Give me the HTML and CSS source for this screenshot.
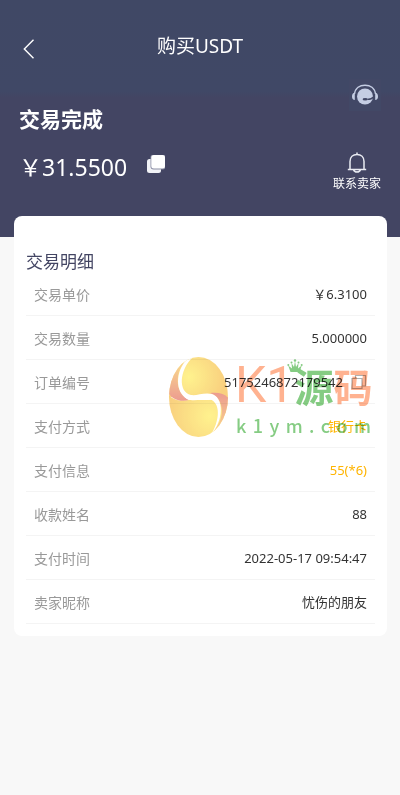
FILE: index.html
```html
<!DOCTYPE html>
<html lang="zh-CN">
<head>
    <meta charset="utf-8">
    <meta name="viewport" content="width=device-width, initial-scale=1">
    <title>购买USDT</title>
    <link rel="stylesheet" href="styles.css">
</head>
<body>
    <header class="hero">
        <div class="nav">
            <button type="button" class="icon-btn back" aria-label="返回">
                <svg width="12" height="20" viewBox="0 0 12 20" fill="none" stroke="#fff" stroke-width="1.4"><path d="M10.5 .8 1.3 10l9.2 9.2"/></svg>
            </button>
            <h1>购买USDT</h1>
        </div>
        <button type="button" class="icon-btn service" aria-label="客服">
            <svg width="32" height="32" viewBox="0 0 32 32">
                <path d="M5.5 15C6.2 9 10.8 6.200 16 6.200S25.800 9 26.500 15" fill="none" stroke="#c5cde3" stroke-width="1.400"/>
                <path d="M5.800 13.800v7.200C4 21 3 19.500 3 17.400s1-3.600 2.800-3.600zM26.200 13.800v7.200c1.800 0 2.800-1.500 2.800-3.600s-1-3.600-2.800-3.600z" fill="#c5cde3"/>
                <circle cx="16" cy="17.500" r="8" fill="#c5cde3"/>
                <path d="M24.500 18c-1.500 2-3.800 2.300-6 2.300" fill="none" stroke="#424765" stroke-width="1.300"/>
                <ellipse cx="16.200" cy="20.300" rx="2.600" ry="1.200" fill="#424765"/>
            </svg>
        </button>
        <h2 class="status">交易完成</h2>
        <div class="summary">
            <div class="amount">
                <span>&#xFFE5;31.5500</span>
                <button type="button" class="icon-btn" aria-label="复制金额">
                    <svg width="18" height="18" viewBox="0 0 18 18"><rect x="0" y="4" width="14" height="14" rx="2.500" fill="#f1f2f6"/><rect x="3.500" y="-.5" width="15" height="15" rx="3" fill="#8b8ea4"/><rect x="4.300" y="0" width="13.700" height="13.500" rx="2.500" fill="#fff"/></svg>
                </button>
            </div>
            <button type="button" class="icon-btn contact">
                <svg width="20" height="21" viewBox="0 0 20 21" fill="none" stroke="#e9ebf2" stroke-width="1.500">
                    <path d="M10 .5v2M3 17.200V9.500C3 5 6 2.500 10 2.500s7 2.500 7 7v7.700M.8 17.500h18.400M6.500 17.800c.5 1.500 1.800 2.300 3.500 2.300s3-.8 3.500-2.300"/>
                </svg>
                <span>联系卖家</span>
            </button>
        </div>
    </header>

    <main class="card">
        <h2>交易明细</h2>
        <dl class="detail">
            <div class="row"><dt>交易单价</dt><dd>&#xFFE5;6.3100</dd></div>
            <div class="row"><dt>交易数量</dt><dd>5.000000</dd></div>
            <div class="row">
                <dt>订单编号</dt>
                <dd>5175246872179542
                    <button type="button" class="icon-btn copy" aria-label="复制订单编号">
                        <svg width="16" height="16" viewBox="0 0 16 16" fill="none" stroke="#b0b0b0" stroke-width="1.200"><path d="M1 4.500h10v10H1zM4.500 4.500V1.500h10V12H11"/></svg>
                    </button>
                </dd>
            </div>
            <div class="row"><dt>支付方式</dt><dd class="pay">银行卡</dd></div>
            <div class="row"><dt>支付信息</dt><dd class="pay">55(*6)</dd></div>
            <div class="row"><dt>收款姓名</dt><dd>88</dd></div>
            <div class="row"><dt>支付时间</dt><dd>2022-05-17 09:54:47</dd></div>
            <div class="row"><dt>卖家昵称</dt><dd>忧伤的朋友</dd></div>
        </dl>

        <div class="watermark">
            <svg class="ball" width="60" height="80" viewBox="0 0 60 80">
                <defs>
                    <radialGradient id="gold-top" gradientUnits="userSpaceOnUse" cx="20" cy="20" r="36"><stop offset="0" stop-color="#fff07a"/><stop offset="1" stop-color="#f8c868"/></radialGradient>
                    <radialGradient id="gold-bottom" gradientUnits="userSpaceOnUse" cx="41" cy="59" r="42"><stop offset="0" stop-color="#fff07a"/><stop offset="1" stop-color="#f8c868"/></radialGradient>
                    <linearGradient id="rim-left" x1="0" y1="0" x2="0" y2="1"><stop offset="0" stop-color="#fbdc78"/><stop offset="1" stop-color="#e98a7c"/></linearGradient>
                    <linearGradient id="rim-right" x1="0" y1="0" x2="0" y2="1"><stop offset="0" stop-color="#e98a7c"/><stop offset="1" stop-color="#fbd778"/></linearGradient>
                    <clipPath id="egg"><ellipse cx="29.500" cy="40" rx="29.500" ry="40"/></clipPath>
                </defs>
                <g clip-path="url(#egg)">
                    <path d="M0 0h60v40H0z" fill="url(#gold-top)"/>
                    <path d="M0 38c5 6 12 6 20 5h20c8 0 10-4 20-4v41H0z" fill="url(#gold-bottom)"/>
                    <path d="M20 0H0v37c4 6 12 8 20 6C8 37 6 22 12 10z" fill="url(#rim-left)"/>
                    <path d="M40 80h20V42c-3-5-10-7-19-6 14 5 14 22 8 32z" fill="url(#rim-right)"/>
                    <path d="M18 2C6 15 6 35 18 42c7 3 14 0 21 0 11 1 14 17 3 36 13-15 13-37 1-41-8-2-15 2-21 1C9 35 10 13 24 0z" fill="#fff"/>
                </g>
            </svg>
            <div class="brand">
                <div class="brand-name">
                    <span class="latin">K1</span>
                    <span class="leaf">源</span>
                    <span>码</span>
                    <svg class="crown" width="16" height="14" viewBox="0 0 16 14" fill="#70c36d"><path d="M3.500 13 1.200 6.500 5 9.500 4.500 4 7 8l1-6 1 6 2.500-4-.5 5.500 3.800-3-2.300 6.500z"/><circle cx="1.300" cy="6" r="1"/><circle cx="4.500" cy="3.500" r="1"/><circle cx="8" cy="1.500" r="1.200"/><circle cx="11.500" cy="3.500" r="1"/><circle cx="14.700" cy="6" r="1"/></svg>
                </div>
                <div class="brand-site"><span>k</span><span>1</span><span>y</span><span>m</span><span>.</span><span>c</span><span>o</span><span>m</span></div>
            </div>
        </div>
    </main>
</body>
</html>
```
FILE: styles.css
```css
* {
    box-sizing: border-box;
}

body {
    margin: 0;
    background: #f8f8f8;
    color: #333;
    font-family: "Noto Sans", "Noto Sans CJK SC", sans-serif;
    font-size: 13px;
}

h1, h2, dl, dd {
    margin: 0;
}

.icon-btn {
    padding: 0;
    border: 0;
    background: none;
    color: inherit;
    font: inherit;
    cursor: pointer;
}

.icon-btn svg {
    display: block;
    flex: none;
}

.hero {
    display: flex;
    flex-direction: column;
    padding: 30px 19px 44px;
    background: linear-gradient(#404865 0, #404866 92px, #434563 98px, #434563 100%);
    color: #fff;
}

.nav {
    display: grid;
    grid-template-columns: 20px 1fr 20px;
    align-items: center;
    height: 32px;
}

.nav h1 {
    font-size: 19px;
    font-weight: 400;
    line-height: 32px;
    text-align: center;
}

.back {
    padding: 6px 0 0 4px;
}

.service {
    align-self: flex-end;
    margin-top: 17px;
    background: #424866;
}

.status {
    margin-top: -6px;
    font-size: 21px;
    font-weight: 700;
    line-height: 28px;
}

.summary {
    display: flex;
    justify-content: space-between;
    margin-top: 19px;
}

.amount {
    display: flex;
    align-items: flex-start;
    gap: 20px;
    font-size: 23px;
    line-height: 30px;
}

.amount .icon-btn {
    padding-top: 3px;
}

.contact {
    display: flex;
    flex-direction: column;
    align-items: center;
    gap: 2px;
    font-size: 12px;
    line-height: 18px;
}

.card {
    position: relative;
    margin: -21px 13px 0 14px;
    padding: 36px 12px 12px;
    border-radius: 8px;
    background: #fff;
}

.card h2 {
    color: #434563;
    font-size: 17px;
    font-weight: 400;
    line-height: 20px;
}

.row {
    display: flex;
    justify-content: space-between;
    align-items: center;
    height: 44px;
    padding: 0 8px;
    border-bottom: 1px solid #f4f4f4;
}

.row dt {
    color: #999;
    font-size: 14px;
}

.row dd {
    display: flex;
    align-items: center;
    gap: 8px;
}

.row .pay {
    color: #ffb400;
}

/* site mark laid over the order rows */
.watermark {
    position: absolute;
    top: 141px;
    right: 16px;
    display: flex;
    gap: 6px;
    opacity: .85;
    mix-blend-mode: multiply;
    pointer-events: none;
}

.brand {
    width: 136px;
}

.brand-name {
    position: relative;
    display: flex;
    justify-content: space-between;
    color: #ffa57d;
    font-family: "Noto Sans CJK SC", sans-serif;
    font-size: 39px;
    font-weight: 700;
    line-height: 56px;
}

.brand-name .latin {
    font-family: Roboto, sans-serif;
    font-size: 50px;
    font-weight: 400;
}

.brand-name .leaf,
.brand-site {
    color: #70c36d;
}

.crown {
    position: absolute;
    top: 2px;
    left: 52px;
}

.brand-site {
    display: flex;
    justify-content: space-between;
    padding-left: 1px;
    font-family: "Noto Sans CJK SC", sans-serif;
    font-size: 18px;
    font-weight: 500;
    line-height: 24px;
}
```
